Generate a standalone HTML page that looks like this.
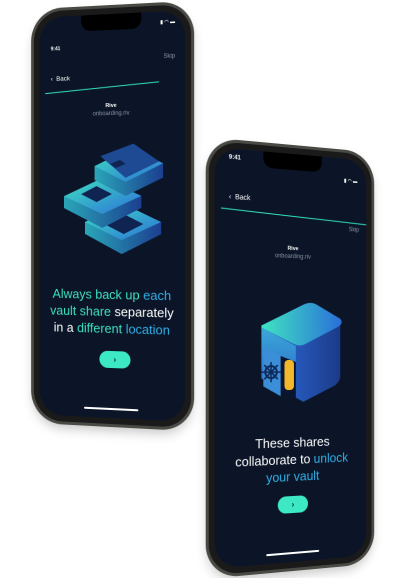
<!DOCTYPE html>
<html><head><meta charset="utf-8">
<style>
html,body{margin:0;padding:0;background:#fff;width:409px;height:578px;overflow:hidden;font-family:"Liberation Sans",sans-serif}
.wrap{position:absolute;left:0;top:0;width:409px;height:578px}
.ph{position:absolute;border-radius:30px;background:#1a1a1a;box-shadow:0 0 0 3px #4a4a44, 0 6px 12px rgba(0,0,0,.25);}
.scr{position:absolute;left:6px;top:6px;right:6px;bottom:6px;border-radius:25px;background:#0b1527;overflow:hidden;color:#fff}
.notch{position:absolute;left:50%;top:0;width:62px;height:16px;margin-left:-31px;background:#000;border-radius:0 0 10px 10px}
.t{position:absolute;font-size:6px;font-weight:bold}
.sm{position:absolute;font-size:6px;color:#8a94a6}
.ctr{left:0;right:0;text-align:center}
.dash{position:absolute;height:1px;background:#35e0c0}
.big{position:absolute;left:0;right:0;text-align:center;font-size:13px;line-height:17px;color:#fff}
.c1{color:#3fe0c4}.c2{color:#2fb0e8}
.btn{position:absolute;width:32px;height:17px;border-radius:9px;background:#3de8c5;color:#0b1527;font-size:8px;font-weight:bold;text-align:center;line-height:17px}
.home{position:absolute;left:50%;width:56px;margin-left:-28px;height:2px;border-radius:1px;background:#fff}
</style></head><body>
<div class="wrap">
<!-- phone 1 -->
<div style="position:absolute;left:30px;top:8px;width:162px;height:416px;perspective:1000px">
 <div class="ph" style="left:0;top:0;width:162px;height:416px;transform:rotateY(-14deg)">
  <div class="scr">
   <div class="notch"></div>
   <div class="t" style="left:12px;top:30px;font-size:5px">9:41</div>
   <div class="t" style="right:10px;top:8px;font-size:5px">▮ ◠ ▬</div>
   <div class="sm" style="right:10px;top:42px">Skip</div>
   <div class="t" style="left:12px;top:60px;font-size:6.5px;font-weight:normal">‹&nbsp; Back</div>
   <div class="dash" style="left:6px;width:118px;top:73px;transform:rotate(-4deg)"></div>
   <div class="t ctr" style="top:89px;font-size:5.5px">Rive</div>
   <div class="sm ctr" style="top:97px">onboarding.riv</div>
   <svg style="position:absolute;left:18px;top:120px" width="120" height="130" viewBox="0 0 120 130">
    <defs>
     <linearGradient id="g1" x1="0" y1="0" x2="1" y2="1"><stop offset="0" stop-color="#3fe3c0"/><stop offset="1" stop-color="#2c6fd8"/></linearGradient>
     <linearGradient id="g2" x1="0" y1="0" x2="1" y2="0"><stop offset="0" stop-color="#2aa6b8"/><stop offset="1" stop-color="#1b3f90"/></linearGradient>
    </defs>
    <path d="M30 88 L70 70 L108 88 L108 100 L68 120 L30 100 Z" fill="url(#g2)"/>
    <path d="M30 88 L70 70 L108 88 L68 106 Z" fill="url(#g1)"/>
    <path d="M50 90 L70 80 L90 90 L70 100 Z" fill="#0f2450"/>
    <path d="M8 62 L48 44 L88 62 L88 74 L48 94 L8 74 Z" fill="url(#g2)"/>
    <path d="M8 62 L48 44 L88 62 L48 80 Z" fill="url(#g1)"/>
    <path d="M26 60 L42 52 L58 60 L42 68 Z" fill="#0f2450"/>
    <path d="M40 32 L78 14 L110 30 L110 44 L72 62 L40 46 Z" fill="url(#g2)"/>
    <path d="M40 32 L78 14 L110 30 L72 48 Z" fill="url(#g1)"/>
    <path d="M46 22 L80 10 L106 28 L72 44 Z" fill="#1d4a92"/>
    <path d="M56 30 L66 26 L72 30 L62 34 Z" fill="#0f2450"/>
   </svg>
   <div class="big" style="top:272px"><span class="c1">Always back up </span><span class="c2">each</span><br><span class="c1">vault share</span> separately<br>in a <span class="c1">different</span> <span class="c2">location</span></div>
   <div class="btn" style="left:63px;top:337px">›</div>
   <div class="home" style="bottom:8px"></div>
  </div>
 </div>
</div>
<!-- phone 2 -->
<div style="position:absolute;left:207px;top:148px;width:172px;height:420px;perspective:800px">
 <div class="ph" style="left:0;top:0;width:172px;height:420px;transform:rotateY(19deg)">
  <div class="scr">
   <div class="notch"></div>
   <div class="t" style="left:14px;top:6px;font-size:6px">9:41</div>
   <div class="t" style="right:10px;top:20px;font-size:5px">▮ ◠ ▬</div>
   <div class="t" style="left:14px;top:44px;font-size:7px;font-weight:normal">‹&nbsp; Back</div>
   <div class="dash" style="left:6px;right:0;top:62px;transform:rotate(3deg)"></div>
   <div class="sm" style="right:8px;top:70px">Skip</div>
   <div class="t ctr" style="top:92px;font-size:5.5px">Rive</div>
   <div class="sm ctr" style="top:100px">onboarding.riv</div>
   <svg style="position:absolute;left:37px;top:142px" width="100" height="110" viewBox="0 0 100 110">
    <defs>
     <linearGradient id="s1" x1="0" y1="0" x2="1" y2="0"><stop offset="0" stop-color="#3fe3c0"/><stop offset="1" stop-color="#2a6fd8"/></linearGradient>
     <linearGradient id="s2" x1="0" y1="0" x2="1" y2="0"><stop offset="0" stop-color="#2d6fe0"/><stop offset="1" stop-color="#1c3a88"/></linearGradient>
     <linearGradient id="s3" x1="0" y1="0" x2="0" y2="1"><stop offset="0" stop-color="#3aa8d8"/><stop offset="1" stop-color="#2a5fc8"/></linearGradient>
    </defs>
    <path d="M10 30 L55 8 Q62 5 68 8 L94 22 L94 80 Q94 86 88 90 L54 106 L10 82 Z" fill="url(#s2)"/>
    <path d="M10 30 L55 8 Q62 5 68 8 L94 22 Q98 26 92 30 L56 48 Q50 51 44 48 L10 32 Z" fill="url(#s1)"/>
    <path d="M10 32 L46 50 L46 102 L10 82 Z" fill="url(#s3)"/>
    <path d="M30 60 L46 66 L46 104 L30 96 Z" fill="#0a1630"/>
    <rect x="34" y="64" width="10" height="30" rx="4" fill="#f2b72a"/>
    <path d="M12 52 L30 60 L30 100 L12 90 Z" fill="#3b8fd8"/>
    <circle cx="20" cy="76" r="6" fill="none" stroke="#0f2a5a" stroke-width="2"/>
    <path d="M20 66 V86 M10 76 H30 M13 69 L27 83 M27 69 L13 83" stroke="#0f2a5a" stroke-width="1.6"/>
   </svg>
   <div class="big" style="top:280px">These shares<br>collaborate to <span class="c2">unlock</span><br><span class="c2">your vault</span></div>
   <div class="btn" style="left:64px;top:342px">›</div>
   <div class="home" style="bottom:8px"></div>
  </div>
 </div>
</div>
</div>
</body></html>
